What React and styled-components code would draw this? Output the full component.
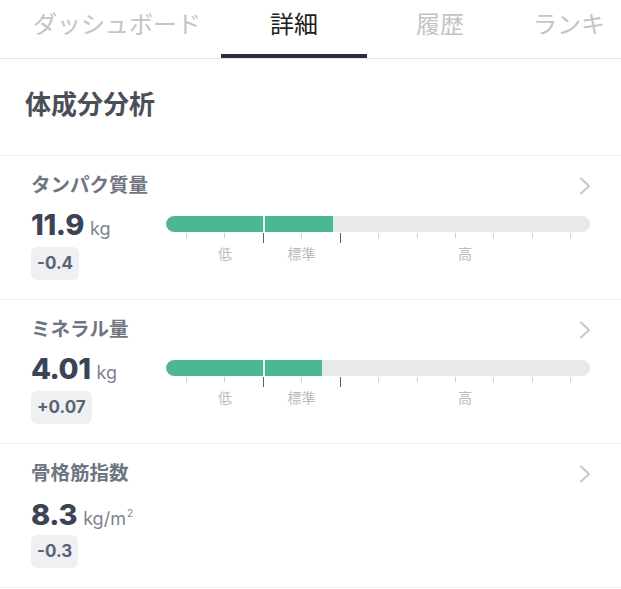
import React from "react";
import styled, { createGlobalStyle } from "styled-components";

const GlobalStyle = createGlobalStyle`
  html, body { margin: 0; padding: 0; background: #ffffff; }
  body {
    font-family: Inter, "Noto Sans CJK JP", "Noto Sans", sans-serif;
    -webkit-font-smoothing: antialiased;
  }
  * { box-sizing: border-box; }
`;

const Page = styled.div`
  width: 621px;
  background: #fff;
  overflow: hidden;
`;

const TabBar = styled.nav`
  height: 59px;
  border-bottom: 1px solid #e4e5e7;
`;

const TabScroller = styled.div`
  display: flex;
  width: 606px;
  height: 100%;
  padding-left: 13px;
  white-space: nowrap;
  overflow: hidden;
`;

const Tab = styled.div`
  position: relative;
  flex: 0 0 auto;
  min-width: 146px;
  padding: 0 20px;
  display: flex;
  justify-content: center;
  font-family: "Noto Sans CJK JP", sans-serif;
  font-size: 24px;
  line-height: 46px;
  font-weight: 400;
  color: ${(p) => (p.$active ? "#1f2023" : "#c3c4c7")};
  &::after {
    content: "";
    display: ${(p) => (p.$active ? "block" : "none")};
    position: absolute;
    left: 0;
    right: 0;
    bottom: 0;
    height: 4px;
    background: #2b2e3a;
  }
`;

const SectionHeader = styled.div`
  height: 97px;
  padding: 0 25px;
  display: flex;
  align-items: center;
  border-bottom: 1px solid #ededed;
`;

const SectionTitle = styled.h2`
  margin: 0 0 9px;
  font-family: "Noto Sans CJK JP", sans-serif;
  font-size: 26px;
  font-weight: 700;
  color: #4a4f57;
`;

const Row = styled.section`
  padding: 14px 31px 19px 31px;
  border-bottom: 1px solid #ededed;
`;

const RowHeader = styled.div`
  display: flex;
  justify-content: space-between;
  align-items: center;
  height: 28px;
`;

const RowTitle = styled.h3`
  margin: 0;
  font-family: "Noto Sans CJK JP", sans-serif;
  font-size: 19.5px;
  line-height: 28px;
  font-weight: 700;
  color: #6f7681;
`;

const Chevron = styled.svg`
  width: 12px;
  height: 18px;
  margin-top: 4px;
  margin-right: -1px;
`;

const Body = styled.div`
  display: flex;
  margin-top: 7px;
`;

const Left = styled.div`
  flex: 0 0 135px;
  display: flex;
  flex-direction: column;
  align-items: flex-start;
`;

const ValueLine = styled.div`
  display: flex;
  align-items: baseline;
  height: 34px;
  line-height: 40px;
`;

const Value = styled.span`
  font-family: Inter, sans-serif;
  font-size: 29px;
  font-weight: 800;
  letter-spacing: -0.4px;
  color: #3b4356;
`;

const Unit = styled.span`
  margin-left: 6px;
  font-family: Inter, sans-serif;
  font-size: 18px;
  font-weight: 400;
  color: #7c838f;
  sup {
    font-size: 10px;
    vertical-align: 8px;
    margin-left: 1px;
  }
`;

const Badge = styled.span`
  margin-top: 8px;
  height: 33px;
  padding: 0 6px;
  border-radius: 6px;
  background: #eef0f3;
  font-family: Inter, sans-serif;
  font-size: 17px;
  line-height: 33px;
  font-weight: 700;
  color: #5c6370;
`;

const Gauge = styled.div`
  flex: 1;
  padding-top: 11px;
`;

const Track = styled.div`
  height: 16px;
  border-radius: 8px;
  background: #e7e9ed;
  overflow: hidden;
`;

const Fill = styled.div`
  position: relative;
  height: 100%;
  background: #4bb794;
  border-radius: 8px 0 0 8px;
  &::after {
    content: "";
    position: absolute;
    top: 0;
    bottom: 0;
    left: 97px;
    width: 1.5px;
    background: #e9f7f1;
  }
`;

const Ticks = styled.div`
  display: flex;
  justify-content: space-between;
  align-items: flex-start;
  padding: 0 19px 0 20px;
  height: 11px;
`;

const Tick = styled.span`
  width: ${(p) => (p.$major ? "1.5px" : "1px")};
  height: ${(p) => (p.$major ? "10px" : "5px")};
  margin-top: 1px;
  background: ${(p) => (p.$major ? "#5b6068" : "#c9ccd1")};
`;

const Labels = styled.div`
  display: grid;
  grid-template-columns: 21fr 76fr 77fr 250fr;
  margin-top: 0;
`;

const Label = styled.span`
  text-align: center;
  font-family: "Noto Sans CJK JP", sans-serif;
  font-size: 14px;
  line-height: 20px;
  color: #b7bbc1;
`;

const ChevronIcon = () => (
  <Chevron viewBox="0 0 12 18" fill="none">
    <path d="M2 1.5 L10 9 L2 16.5" stroke="#c6c7cb" strokeWidth="2" strokeLinecap="round" strokeLinejoin="round" />
  </Chevron>
);

const GaugeBar = ({ percent }) => (
  <Gauge>
    <Track>
      <Fill style={{ width: `${percent}%` }} />
    </Track>
    <Ticks>
      {Array.from({ length: 11 }).map((_, i) => (
        <Tick key={i} $major={i === 2 || i === 4} />
      ))}
    </Ticks>
    <Labels>
      <span />
      <Label>低</Label>
      <Label>標準</Label>
      <Label>高</Label>
    </Labels>
  </Gauge>
);

const items = [
  { title: "タンパク質量", value: "11.9", unit: "kg", diff: "-0.4", percent: 39.4 },
  { title: "ミネラル量", value: "4.01", unit: "kg", diff: "+0.07", percent: 36.8 },
  { title: "骨格筋指数", value: "8.3", unit: "kg/m", sup: "2", diff: "-0.3" },
];

export default function App() {
  return (
    <Page>
      <GlobalStyle />
      <TabBar>
        <TabScroller>
          <Tab>ダッシュボード</Tab>
          <Tab $active>詳細</Tab>
          <Tab>履歴</Tab>
          <Tab>ランキング</Tab>
        </TabScroller>
      </TabBar>
      <SectionHeader>
        <SectionTitle>体成分分析</SectionTitle>
      </SectionHeader>
      {items.map((it) => (
        <Row key={it.title}>
          <RowHeader>
            <RowTitle>{it.title}</RowTitle>
            <ChevronIcon />
          </RowHeader>
          <Body>
            <Left>
              <ValueLine>
                <Value>{it.value}</Value>
                <Unit>
                  {it.unit}
                  {it.sup && <sup>{it.sup}</sup>}
                </Unit>
              </ValueLine>
              <Badge>{it.diff}</Badge>
            </Left>
            {it.percent != null && <GaugeBar percent={it.percent} />}
          </Body>
        </Row>
      ))}
    </Page>
  );
}
